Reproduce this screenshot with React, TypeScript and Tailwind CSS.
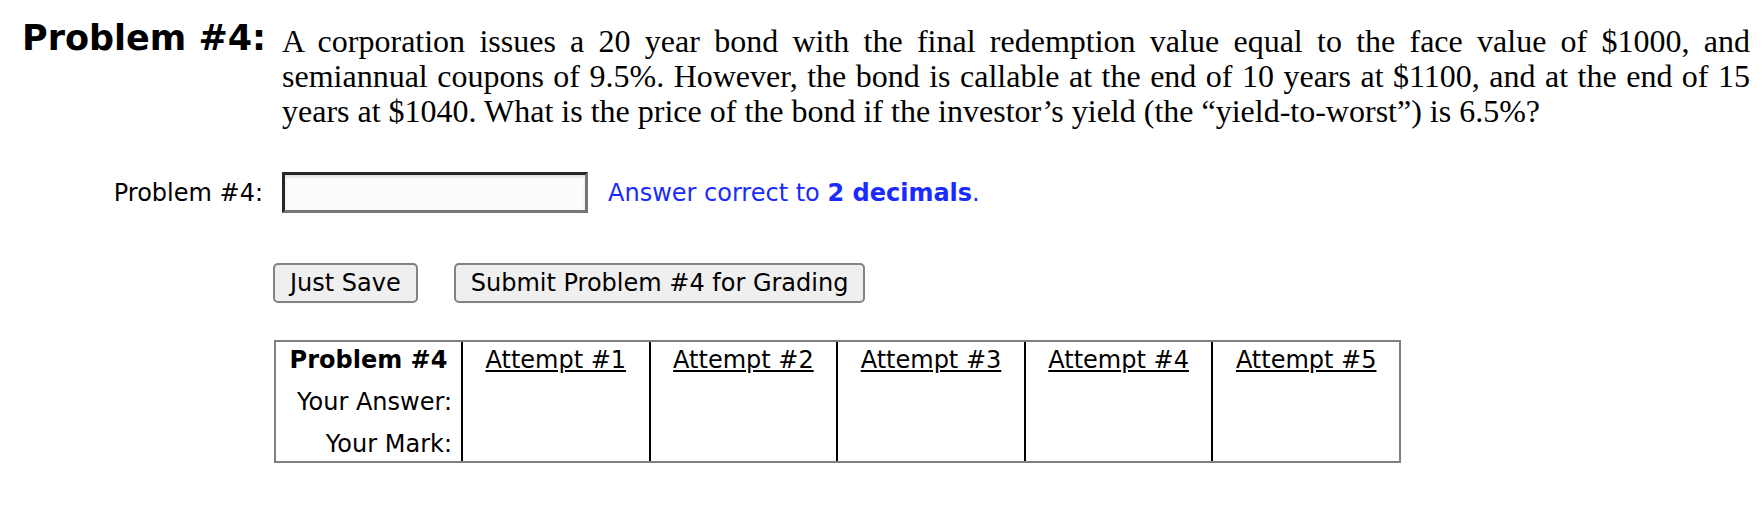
import React from "react";

const sans = "font-['Verdana','DejaVu_Sans',sans-serif]";
const serif = "font-['Liberation_Serif','Times_New_Roman',serif]";

const attempts = ["Attempt #1", "Attempt #2", "Attempt #3", "Attempt #4", "Attempt #5"];

export default function App() {
  return (
    <div className={`w-[1762px] h-[512px] overflow-hidden bg-white text-black ${sans}`}>
      {/* question */}
      <div className="flex items-start pt-[21px] pl-[22px]">
        <span className="w-[260px] shrink-0 text-[35px] leading-[35px] font-bold">Problem #4:</span>
        <div className={`mt-[3px] w-[1468px] text-[32px] leading-[35px] ${serif}`}>
          <div className="text-justify [text-align-last:justify]">
            A corporation issues a 20 year bond with the final redemption value equal to the face value of $1000, and
          </div>
          <div className="text-justify [text-align-last:justify]">
            semiannual coupons of 9.5%. However, the bond is callable at the end of 10 years at $1100, and at the end of 15
          </div>
          <div>
            years at $1040. What is the price of the bond if the investor’s yield (the “yield-to-worst”) is 6.5%?
          </div>
        </div>
      </div>

      {/* answer row */}
      <div className="flex items-center mt-[43px] h-[41px] text-[24px]">
        <label className="w-[282px] pr-[19px] text-right">Problem #4:</label>
        <input
          type="text"
          className="w-[306px] h-[41px] border-[3px] border-t-[#262626] border-l-[#262626] border-r-[#767676] border-b-[#767676] bg-[#fcfcfc] shadow-[inset_0_2px_3px_rgba(0,0,0,0.12)] outline-none"
        />
        <span className="ml-[20px] text-[#1a2bff]">
          Answer correct to <b>2 decimals</b>.
        </span>
      </div>

      {/* buttons */}
      <div className="flex gap-[36px] mt-[50px] pl-[273px] text-[24px]">
        <button className="h-[40px] px-[15px] border-2 border-[#838383] rounded-[5px] bg-[#efefef] leading-[28px]">
          Just Save
        </button>
        <button className="h-[40px] px-[15px] border-2 border-[#838383] rounded-[5px] bg-[#efefef] leading-[28px]">
          Submit Problem #4 for Grading
        </button>
      </div>

      {/* attempts table */}
      <div className="ml-[274px] mt-[37px] w-[1127px] border-2 border-[#808080] grid grid-cols-[185px_repeat(5,1fr)] text-[24px] leading-[34px]">
        <div className="flex flex-col gap-[8px] pt-[1px]">
          <div className="text-center font-bold">Problem #4</div>
          <div className="text-right pr-[9px]">Your Answer:</div>
          <div className="text-right pr-[9px]">Your Mark:</div>
        </div>
        {attempts.map((a) => (
          <div key={a} className="flex flex-col gap-[8px] pt-[1px] border-l-2 border-black">
            <div className="text-center">
              <a href="#" className="underline text-black">
                {a}
              </a>
            </div>
            <div className="h-[34px]" />
            <div className="h-[34px]" />
          </div>
        ))}
      </div>
    </div>
  );
}
